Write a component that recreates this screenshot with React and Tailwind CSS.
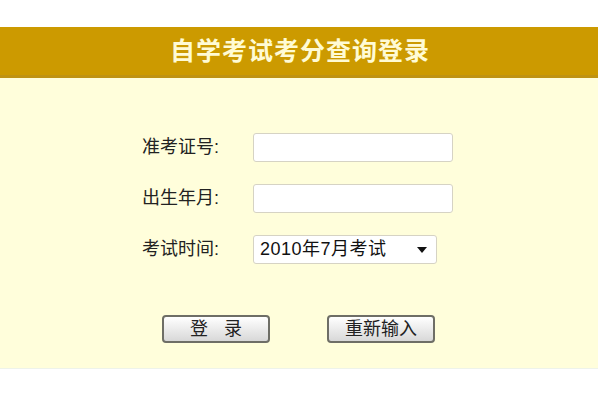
export default function App() {
  const font = { fontFamily: '"Liberation Sans", "Noto Sans CJK SC", sans-serif' };
  return (
    <div className="w-[600px] h-[400px] bg-white pt-[27px]" style={font}>
      <div className="w-[598px] bg-[#fffedb] border-b border-[#eef3ea]">
        <div className="h-[51px] bg-[#cc9a00] border-b-[3px] border-[#bf9312] flex items-center justify-center">
          <h1 className="text-[25px] leading-none font-bold tracking-[1px] text-[#fffbd4] pl-[2px]">
            自学考试考分查询登录
          </h1>
        </div>
        <div className="pl-[142px] pt-[55px] pb-[25px]">
          <div className="flex flex-col gap-[22px]">
            <div className="flex items-center h-[29px]">
              <span className="w-[111px] text-[18px] text-[#222]">准考证号:</span>
              <input className="w-[200px] h-[29px] bg-white border border-[#d6d3c4] rounded-[3px] outline-none" />
            </div>
            <div className="flex items-center h-[29px]">
              <span className="w-[111px] text-[18px] text-[#222]">出生年月:</span>
              <input className="w-[200px] h-[29px] bg-white border border-[#d6d3c4] rounded-[3px] outline-none" />
            </div>
            <div className="flex items-center h-[29px]">
              <span className="w-[111px] text-[18px] text-[#222]">考试时间:</span>
              <div className="w-[184px] h-[29px] bg-white border border-[#d6d3c4] rounded-[3px] flex items-center pl-[6px] pr-[9px] justify-between">
                <span className="text-[18px] text-[#111] tracking-[0.5px]">2010年7月考试</span>
                <svg width="10" height="6" viewBox="0 0 10 6">
                  <path d="M0 0 L10 0 L5 6 Z" fill="#111" />
                </svg>
              </div>
            </div>
          </div>
          <div className="flex gap-[57px] mt-[51px] ml-[20px]">
            <button className="w-[108px] h-[28px] rounded-[4px] border-2 border-[#6e6e66] bg-gradient-to-b from-white to-[#d8d8d8] text-[18px] text-[#222] leading-none tracking-[16px] pl-[16px]">
              登录
            </button>
            <button className="w-[108px] h-[28px] rounded-[4px] border-2 border-[#6e6e66] bg-gradient-to-b from-white to-[#d8d8d8] text-[18px] text-[#222] leading-none">
              重新输入
            </button>
          </div>
        </div>
      </div>
    </div>
  );
}
